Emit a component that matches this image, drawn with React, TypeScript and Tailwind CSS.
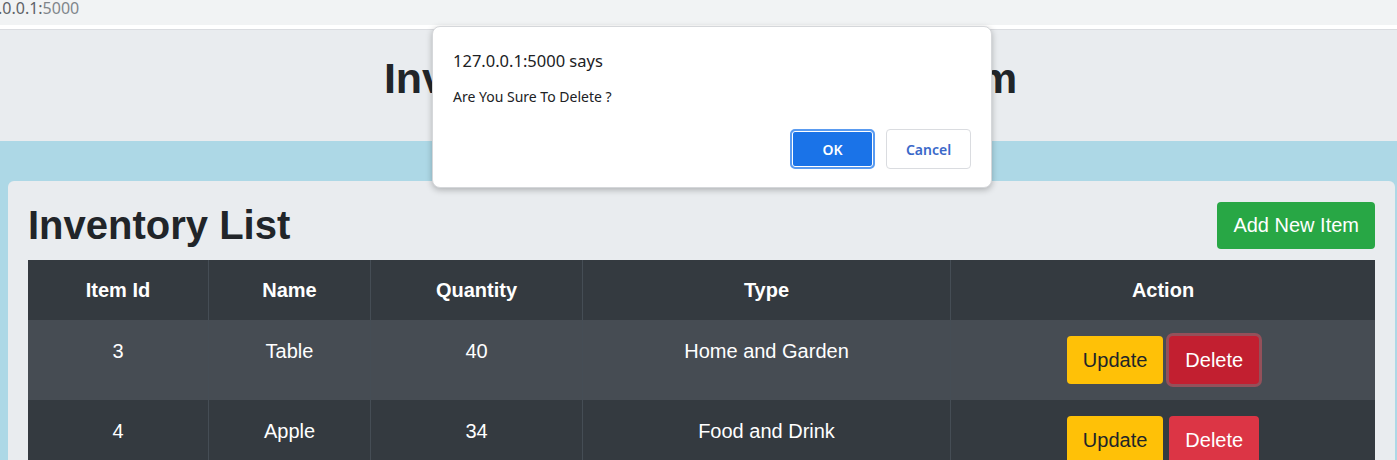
import React from "react";

type Item = {
	id: number;
	name: string;
	quantity: number;
	type: string;
	focused?: boolean;
};

const ITEMS: Item[] = [
	{ id: 3, name: "Table", quantity: 40, type: "Home and Garden", focused: true },
	{ id: 4, name: "Apple", quantity: 34, type: "Food and Drink" },
];

const COLUMNS = ["Item Id", "Name", "Quantity", "Type", "Action"];

const gridCols = "grid grid-cols-[181px_162px_212px_368px_1fr]";
const cellBorder = "border-r border-[#454d55] last:border-r-0";

function ConfirmDialog() {
	return (
		<div className="absolute left-[432px] top-[26px] h-[162px] w-[560px] rounded-[8px] border border-[#d5d7da] bg-white shadow-[0_2px_6px_rgba(0,0,0,0.25)] font-['Segoe_UI','Noto_Sans',sans-serif]">
			<p className="absolute left-[20px] top-[22px] text-[16.5px] leading-[24px] text-[#202124]">
				127.0.0.1:5000 says
			</p>
			<p className="absolute left-[20px] top-[60px] text-[14px] leading-[20px] text-[#202124]">
				Are You Sure To Delete ?
			</p>
			<div className="absolute right-[20px] top-[102px] flex gap-[11px]">
				<button
					type="button"
					className="flex h-[40px] w-[85px] items-center justify-center rounded-[5px] border-2 border-[#5a9bf0] bg-[#1a73e8] text-[14px] font-semibold text-white ring-1 ring-inset ring-white"
				>
					OK
				</button>
				<button
					type="button"
					className="flex h-[40px] w-[85px] items-center justify-center rounded-[4px] border border-[#dadce0] bg-white text-[14px] font-semibold text-[#3a68c9]"
				>
					Cancel
				</button>
			</div>
		</div>
	);
}

function ItemRow({ item, striped }: { item: Item; striped: boolean }) {
	return (
		<div
			className={`${gridCols} h-[80px] text-[20px] leading-[30px] text-white ${
				striped ? "bg-[#464c53]" : "bg-[#343a40]"
			}`}
		>
			<div className={`${cellBorder} pt-[16px] text-center`}>{item.id}</div>
			<div className={`${cellBorder} pt-[16px] text-center`}>{item.name}</div>
			<div className={`${cellBorder} pt-[16px] text-center`}>
				{item.quantity}
			</div>
			<div className={`${cellBorder} pt-[16px] text-center`}>{item.type}</div>
			<div className="flex items-start justify-center gap-[6px] pt-[16px]">
				<button
					type="button"
					className="h-[48px] rounded-[4px] bg-[#ffc107] px-[16px] text-[20px] text-[#212529]"
				>
					Update
				</button>
				<button
					type="button"
					className={`h-[48px] rounded-[4px] px-[16px] text-[20px] text-white ${
						item.focused
							? "bg-[#c21f30] ring-[3px] ring-[rgba(225,83,97,0.5)]"
							: "bg-[#dc3545]"
					}`}
				>
					Delete
				</button>
			</div>
		</div>
	);
}

export default function App() {
	return (
		<div className="relative h-[460px] w-[1397px] overflow-hidden bg-[#add8e6] font-['Liberation_Sans',Arial,sans-serif] text-[#212529]">
			{/* browser address strip */}
			<div className="h-[25px] bg-[#f1f3f4] font-['Segoe_UI','Noto_Sans',sans-serif] text-[16px] leading-[17px] text-[#5f6368]">
				<span className="-ml-[2px]">.0.0.1:</span>
				<span className="text-[#80868b]">5000</span>
			</div>
			<div className="h-[5px] border-b border-[#dadce0] bg-white" />

			<header className="h-[111px] bg-[#e9ecef] pt-[22px] text-center">
				<h1 className="ml-[4px] text-[43px] font-bold leading-[52px] text-[#212529]">
					Inventory Management System
				</h1>
			</header>

			<main className="ml-[8px] mr-[2px] mt-[40px] rounded-[6px] bg-[#e9ecef] p-[20px]">
				<div className="flex h-[48px] items-center justify-between">
					<h2 className="text-[40px] font-bold leading-[48px] text-[#212529]">
						Inventory List
					</h2>
					<button
						type="button"
						className="h-[47px] rounded-[4px] bg-[#28a745] px-[16px] text-[20px] text-white"
					>
						Add New Item
					</button>
				</div>

				<div className="mt-[11px]">
					<div
						className={`${gridCols} h-[60px] items-stretch bg-[#343a40] text-[20px] font-bold leading-[30px] text-white`}
					>
						{COLUMNS.map((col) => (
							<div
								key={col}
								className={`${cellBorder} flex items-center justify-center`}
							>
								{col}
							</div>
						))}
					</div>
					{ITEMS.map((item, index) => (
						<ItemRow key={item.id} item={item} striped={index % 2 === 0} />
					))}
				</div>
			</main>

			<ConfirmDialog />
		</div>
	);
}
